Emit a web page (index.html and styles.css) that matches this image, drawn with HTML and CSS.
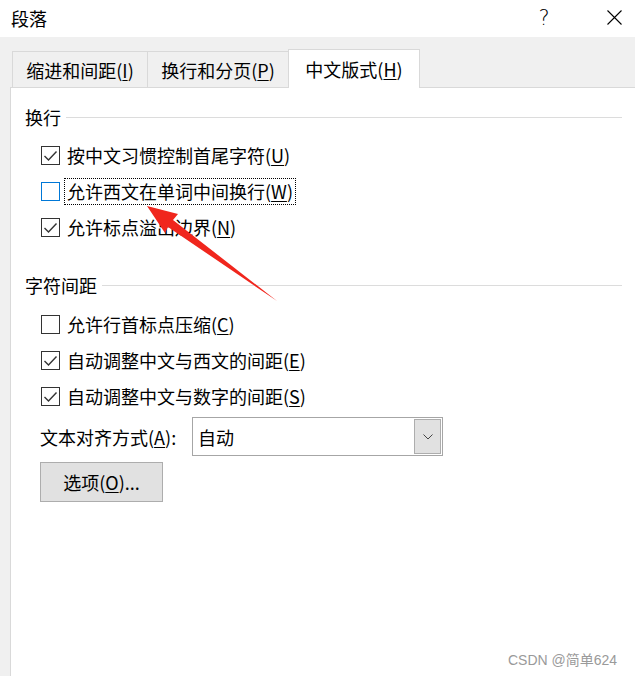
FILE: index.html
```html
<!DOCTYPE html>
<html lang="zh-CN">
<head>
<meta charset="utf-8">
<title>段落</title>
<link rel="stylesheet" href="styles.css">
</head>
<body>
<div class="window">
  <div class="titlebar">
    <span class="title">段落</span>
    <span class="help">?</span>
    <span class="close"><svg width="15" height="15" viewBox="0 0 15 15"><path d="M0.5 0.5 L14.5 14.5 M14.5 0.5 L0.5 14.5" stroke="#000" stroke-width="1.1" fill="none"/></svg></span>
  </div>
  <div class="tabs">
    <div class="tab t1">缩进和间距(<u>I</u>)</div>
    <div class="tab t2">换行和分页(<u>P</u>)</div>
    <div class="tab t3 active">中文版式(<u>H</u>)</div>
  </div>
  <div class="panel">
    <div class="group-head"><span>换行</span><i class="rule"></i></div>
    <div class="rows">
      <div class="row"><span class="box"><svg width="17" height="17" viewBox="0 0 17 17"><path d="M2.5 9 L6.5 13 L14.5 4.5" stroke="#333" stroke-width="1.4" fill="none"/></svg></span><span class="text">按中文习惯控制首尾字符(<u>U</u>)</span></div>
      <div class="row"><span class="box focusbox"></span><span class="text focus">允许西文在单词中间换行(<u>W</u>)</span></div>
      <div class="row"><span class="box"><svg width="17" height="17" viewBox="0 0 17 17"><path d="M2.5 9 L6.5 13 L14.5 4.5" stroke="#333" stroke-width="1.4" fill="none"/></svg></span><span class="text">允许标点溢出边界(<u>N</u>)</span></div>
    </div>
    <div class="group-head g2"><span>字符间距</span><i class="rule"></i></div>
    <div class="rows r2">
      <div class="row"><span class="box"></span><span class="text">允许行首标点压缩(<u>C</u>)</span></div>
      <div class="row"><span class="box"><svg width="17" height="17" viewBox="0 0 17 17"><path d="M2.5 9 L6.5 13 L14.5 4.5" stroke="#333" stroke-width="1.4" fill="none"/></svg></span><span class="text">自动调整中文与西文的间距(<u>E</u>)</span></div>
      <div class="row"><span class="box"><svg width="17" height="17" viewBox="0 0 17 17"><path d="M2.5 9 L6.5 13 L14.5 4.5" stroke="#333" stroke-width="1.4" fill="none"/></svg></span><span class="text">自动调整中文与数字的间距(<u>S</u>)</span></div>
    </div>
    <div class="combo-row">
      <span class="combo-label">文本对齐方式(<u>A</u>):</span>
      <div class="combo">
        <span class="combo-value">自动</span>
        <span class="combo-btn"><svg width="10" height="6" viewBox="0 0 10 6"><path d="M0.5 0.5 L5 5 L9.5 0.5" stroke="#444" stroke-width="1" fill="none"/></svg></span>
      </div>
    </div>
    <div class="btn">选项(<u>O</u>)...</div>
  </div>
  <svg class="arrow" width="635" height="676" viewBox="0 0 635 676">
    <polygon points="147,206 178,214 173,220 277,301 168,227 165,233" fill="#f0261d"/>
  </svg>
  <div class="watermark">CSDN @简单624</div>
</div>
</body>
</html>
```
FILE: styles.css
```css
html, body {
  margin: 0;
  padding: 0;
}
body {
  width: 635px;
  height: 676px;
  overflow: hidden;
  background: #f0f0f0;
  font-family: "Noto Sans CJK SC", "Noto Sans", sans-serif;
  font-size: 18px;
  color: #000;
}
.window {
  position: relative;
  width: 635px;
  height: 676px;
  display: flex;
  flex-direction: column;
}
u {
  text-decoration: underline;
  text-underline-offset: 2px;
  text-decoration-thickness: 1px;
}
.titlebar {
  height: 37px;
  flex: none;
  background: #fff;
  display: flex;
  align-items: center;
  padding: 0 6px 0 11px;
}
.title {
  line-height: 26px;
  margin-top: -2px;
}
.help {
  margin-left: auto;
  width: 30px;
  text-align: center;
  font-family: "DejaVu Sans", sans-serif;
  font-weight: 200;
  font-size: 21px;
  line-height: 26px;
  margin-right: 40px;
  margin-top: -2px;
}
.close {
  width: 30px;
  display: flex;
  justify-content: center;
  margin-top: -2px;
}
.tabs {
  flex: none;
  margin-top: 12px;
  height: 38px;
  padding-left: 12px;
  display: flex;
  align-items: flex-end;
}
.tab {
  box-sizing: border-box;
  height: 36px;
  border: 1px solid #d9d9d9;
  border-bottom: none;
  background: #f0f0f0;
  display: flex;
  align-items: center;
  justify-content: center;
  line-height: 26px;
}
.t1 { width: 136px; }
.t2 { width: 142px; margin-left: -1px; }
.t3 { width: 132px; margin-left: -1px; }
.tab.active {
  height: 39px;
  margin-bottom: -1px;
  background: #fff;
  position: relative;
  z-index: 1;
}
.panel {
  flex: 1;
  background: #fff;
  margin-left: 10px;
  border-top: 1px solid #d9d9d9;
  border-left: 1px solid #d9d9d9;
  padding: 16px 13px 0 14px;
}
.group-head {
  display: flex;
  align-items: center;
  height: 26px;
  line-height: 26px;
}
.group-head.g2 {
  margin-top: 27px;
}
.rule {
  flex: 1;
  height: 1px;
  background: #dcdcdc;
  margin-left: 5px;
}
.rows {
  margin-top: 7px;
  padding-left: 16px;
}
.rows.r2 {
  margin-top: 8px;
}
.row {
  display: flex;
  align-items: center;
  height: 36px;
}
.box {
  box-sizing: border-box;
  width: 19px;
  height: 19px;
  border: 1px solid #333;
  flex: none;
  display: flex;
  align-items: center;
  justify-content: center;
}
.box.focusbox {
  border-color: #0078d7;
}
.text {
  margin-left: 4px;
  border: 1px solid transparent;
  padding: 0 2px;
  line-height: 25px;
  white-space: nowrap;
}
.text.focus {
  border: 1px dotted #000;
}
.combo-row {
  margin-top: 3px;
  padding-left: 15px;
  display: flex;
  align-items: center;
  height: 39px;
}
.combo-label {
  width: 152px;
  flex: none;
  white-space: nowrap;
  line-height: 26px;
}
.combo {
  box-sizing: border-box;
  width: 251px;
  height: 39px;
  border: 1px solid #a6a6a6;
  display: flex;
  align-items: center;
  padding: 1px 1px 1px 5px;
}
.combo-value {
  flex: 1;
  line-height: 26px;
}
.combo-btn {
  box-sizing: border-box;
  width: 27px;
  height: 35px;
  align-self: center;
  border: 1px solid #adadad;
  background: #e1e1e1;
  display: flex;
  align-items: center;
  justify-content: center;
}
.btn {
  box-sizing: border-box;
  margin-top: 6px;
  margin-left: 15px;
  width: 123px;
  height: 40px;
  border: 1px solid #adadad;
  background: #e1e1e1;
  display: flex;
  align-items: center;
  justify-content: center;
  line-height: 26px;
}
.arrow {
  position: absolute;
  left: 0;
  top: 0;
  pointer-events: none;
  z-index: 2;
}
.watermark {
  position: absolute;
  left: 508px;
  top: 650px;
  font-family: "Liberation Sans", "Noto Sans CJK SC", sans-serif;
  font-size: 14px;
  line-height: 20px;
  color: #9a9a9a;
  z-index: 2;
}
```
